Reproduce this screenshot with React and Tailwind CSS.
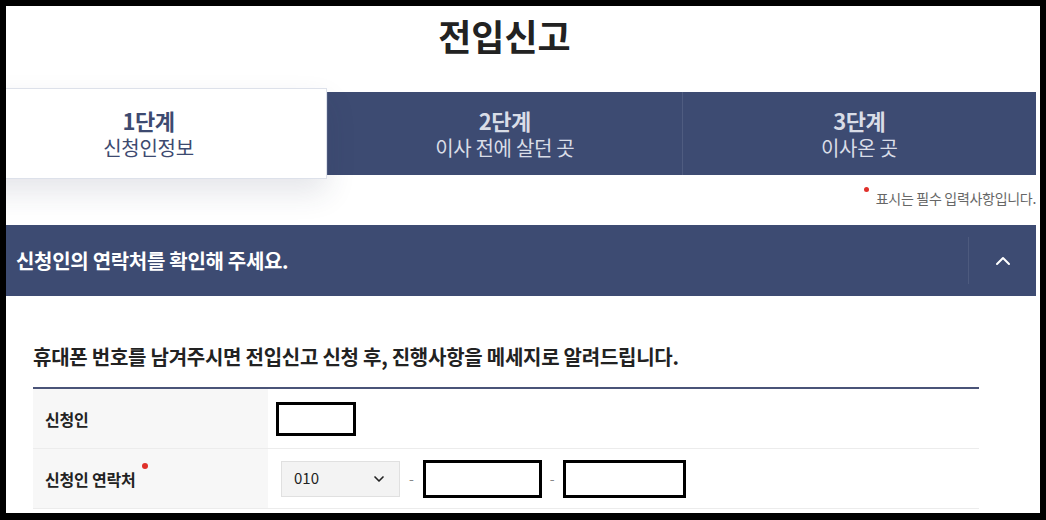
import { ChevronUp, ChevronDown } from 'lucide-react'

const font = { fontFamily: '"Noto Sans CJK KR", "Noto Sans", sans-serif' }

function Tab({ step, label, active }) {
  if (active) {
    return (
      <div className="relative z-10 -my-1 flex w-[357px] flex-col items-center justify-center border border-[#dde1ea] bg-white shadow-[0_14px_30px_rgba(40,50,80,0.12)]">
        <div className="text-[22px] font-bold leading-[28px] tracking-[-0.5px] text-[#3d4a70]">{step}</div>
        <div className="text-[20px] leading-[28px] tracking-[-0.3px] text-[#3d4a70]">{label}</div>
      </div>
    )
  }
  return (
    <div className="flex flex-1 flex-col items-center justify-center border-l border-[#4f5c80] first:border-l-0">
      <div className="text-[22px] font-bold leading-[28px] tracking-[-0.5px] text-[#d9dde7]">{step}</div>
      <div className="text-[20px] leading-[28px] tracking-[-0.3px] text-[#d9dde7]">{label}</div>
    </div>
  )
}

function Row({ label, required, children, last }) {
  return (
    <div className={`flex h-[60px] ${last ? '' : 'border-b border-[#ececec]'}`}>
      <div className="flex w-[235px] items-center bg-[#f7f7f7] pl-3">
        <span className="relative text-[16px] font-bold tracking-[-0.2px] text-[#222]">
          {label}
          {required && <span className="absolute -right-[12px] top-[-4px] h-[6px] w-[6px] rounded-full bg-[#e0302a]" />}
        </span>
      </div>
      <div className="flex flex-1 items-center pl-2">{children}</div>
    </div>
  )
}

export default function App() {
  return (
    <div className="h-[520px] w-[1046px] bg-black pb-[7px] pl-[6px] pr-[6px] pt-[6px]" style={font}>
      <div className="h-full w-full overflow-hidden bg-white">
        <div className="ml-[-36px] w-[1066px]">
          <h1 className="flex h-[56px] items-center justify-center pl-[3px] pt-[2px] text-[36px] font-bold text-[#222]">전입신고</h1>

          <div className="mt-[30px] flex h-[83px] bg-[#3d4b72]">
            <Tab step="1단계" label="신청인정보" active />
            <Tab step="2단계" label="이사 전에 살던 곳" />
            <Tab step="3단계" label="이사온 곳" />
          </div>

          <div className="flex h-[50px] items-center justify-end pb-[4px]">
            <span className="relative pl-[12px] text-[14px] tracking-[-0.3px] text-[#666]">
              <span className="absolute left-0 top-[-1px] h-[5px] w-[5px] rounded-full bg-[#e0302a]" />
              표시는 필수 입력사항입니다.
            </span>
          </div>

          <div className="flex h-[71px] items-center bg-[#3d4b72] pl-[46px]">
            <div className="flex-1 text-[20px] font-bold tracking-[-0.3px] text-white">신청인의 연락처를 확인해 주세요.</div>
            <div className="flex h-[47px] w-[68px] items-center justify-center border-l border-[#4d5a7e]">
              <ChevronUp className="h-6 w-6 text-white" strokeWidth={2} />
            </div>
          </div>

          <div className="pl-[63px] pr-[57px]">
            <p className="mt-[46px] text-[20px] font-bold tracking-[-0.25px] text-[#222]">휴대폰 번호를 남겨주시면 전입신고 신청 후, 진행사항을 메세지로 알려드립니다.</p>
            <div className="mt-[15px] border-t-2 border-[#4a5478]">
              <Row label="신청인">
                <div className="h-[34px] w-[80px] border-[3px] border-black bg-white" />
              </Row>
              <Row label="신청인 연락처" required>
                <div className="flex items-center">
                  <div className="ml-[5px] flex h-[36px] w-[119px] items-center justify-between border border-[#e0e0e0] bg-[#f3f3f3] px-3">
                    <span className="text-[15px] text-[#222]">010</span>
                    <ChevronDown className="h-4 w-4 text-[#222]" strokeWidth={2.5} />
                  </div>
                  <span className="mx-[9px] text-[14px] text-[#888]">-</span>
                  <div className="h-[38px] w-[119px] border-[3px] border-black bg-white" />
                  <span className="mx-[8px] text-[14px] text-[#888]">-</span>
                  <div className="h-[38px] w-[123px] border-[3px] border-black bg-white" />
                </div>
              </Row>
            </div>
          </div>
        </div>
      </div>
    </div>
  )
}
